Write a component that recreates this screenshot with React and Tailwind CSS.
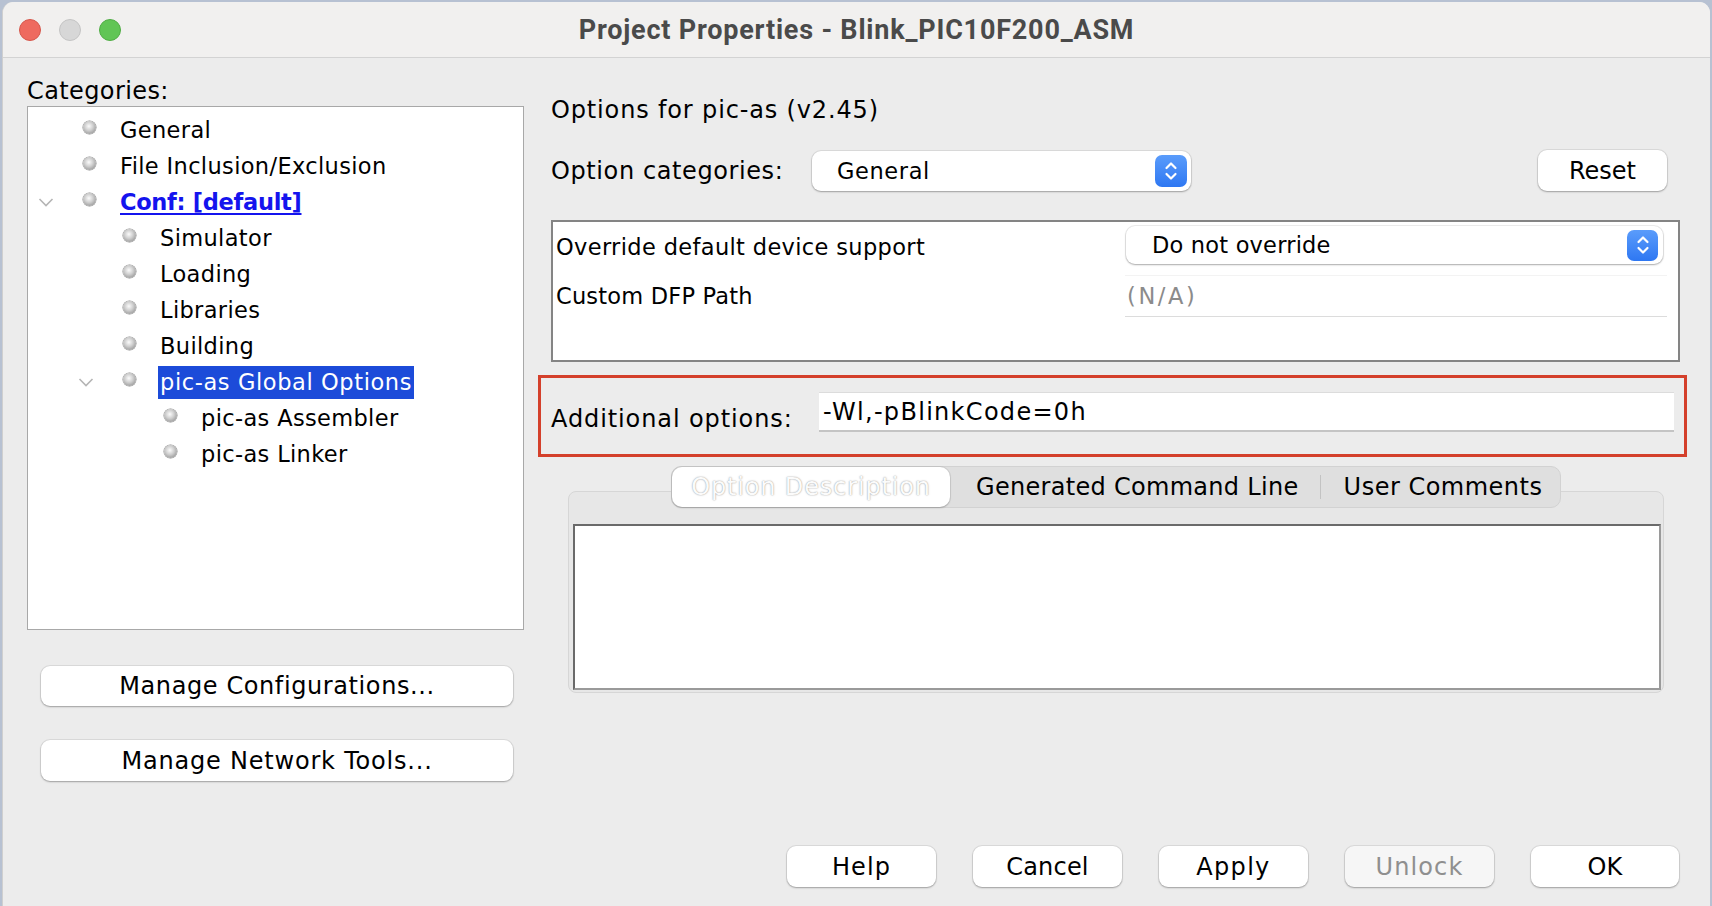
import React from 'react';

const items = [
  { label: 'General', level: 0 },
  { label: 'File Inclusion/Exclusion', level: 0 },
  { label: 'Conf: [default]', level: 0, chevron: true, link: true },
  { label: 'Simulator', level: 1 },
  { label: 'Loading', level: 1 },
  { label: 'Libraries', level: 1 },
  { label: 'Building', level: 1 },
  { label: 'pic-as Global Options', level: 1, chevron: true, selected: true },
  { label: 'pic-as Assembler', level: 2 },
  { label: 'pic-as Linker', level: 2 },
];

const indent = ['pl-0', 'pl-[40px]', 'pl-[81px]'];

function Chevron() {
  return (
    <svg width="18" height="12" viewBox="0 0 18 12">
      <path d="M2.5 3 L9 9.5 L15.5 3" fill="none" stroke="#b5b5b5" strokeWidth="1.6" />
    </svg>
  );
}

function Bullet() {
  return (
    <span className="block w-[13px] h-[13px] mb-[5px] rounded-full bg-[radial-gradient(circle_at_45%_40%,#fbfbfb_0%,#cfcfcf_40%,#7d7d7d_100%)] shadow-[0_0_0_0.5px_#8f8f8f]" />
  );
}

function Stepper({ className }) {
  return (
    <span className={'flex items-center justify-center rounded-[7px] bg-gradient-to-b from-[#5a9cfb] to-[#2e77f2] ' + className}>
      <svg width="16" height="24" viewBox="0 0 16 24">
        <path d="M3.5 9 L8 4.5 L12.5 9" fill="none" stroke="#ffffff" strokeWidth="2.2" strokeLinecap="round" strokeLinejoin="round" />
        <path d="M3.5 15 L8 19.5 L12.5 15" fill="none" stroke="#ffffff" strokeWidth="2.2" strokeLinecap="round" strokeLinejoin="round" />
      </svg>
    </span>
  );
}

function Button({ children, className, disabled }) {
  return (
    <div
      className={
        'flex items-center justify-center rounded-[9px] text-[24px] shadow-[0_0_0_1px_rgba(0,0,0,0.07),0_1px_2px_rgba(0,0,0,0.28)] ' +
        (disabled ? 'bg-[#f6f6f6] text-[#8f8f8f] ' : 'bg-white text-black ') +
        className
      }
    >
      {children}
    </div>
  );
}

export default function App() {
  return (
    <div className="w-[1712px] h-[906px] overflow-hidden bg-[#b7c1d2] pt-[2px] pl-[2px] pr-[2px] [font-family:'DejaVu_Sans',sans-serif] text-[22.5px] leading-[26px] text-black">
      <div className="h-[904px] bg-[#ececec] rounded-t-[11px] flex flex-col border-l border-[#cfcfcf]">
        {/* Title bar */}
        <div className="h-[56px] shrink-0 bg-[#f1f0ef] rounded-t-[11px] border-b border-[#d3d3d3] grid grid-cols-[1fr_auto_1fr] items-center">
          <div className="flex items-center gap-[18px] pl-[16px]">
            <span className="w-[22px] h-[22px] rounded-full bg-[#ee6a5f] border border-[#d6574c]" />
            <span className="w-[22px] h-[22px] rounded-full bg-[#d7d7d7] border border-[#c4c4c4]" />
            <span className="w-[22px] h-[22px] rounded-full bg-[#61c555] border border-[#50ad44]" />
          </div>
          <div className="[font-family:Roboto,sans-serif] font-bold text-[27px] tracking-[0.8px] text-[#4a4a4a]">
            Project Properties - Blink_PIC10F200_ASM
          </div>
          <div />
        </div>

        {/* Body */}
        <div className="flex pl-[24px]">
          {/* Left column */}
          <div className="w-[497px] flex flex-col pt-[20px]">
            <div className="text-[24px] tracking-[0.4px]">Categories:</div>
            <div className="mt-[2px] h-[524px] bg-white border border-[#a8a8a8] pt-[5px] tracking-[0.35px]">
              {items.map((it) => (
                <div key={it.label} className={'flex items-center h-[36px] ' + indent[it.level]}>
                  <span className="w-[36px] flex justify-center">{it.chevron ? <Chevron /> : null}</span>
                  <span className="ml-[19px]">
                    <Bullet />
                  </span>
                  {it.selected ? (
                    <span className="ml-[22px] px-[2px] h-[33px] flex items-center bg-[#1c4bd9] text-white tracking-[0.6px]">
                      {it.label}
                    </span>
                  ) : it.link ? (
                    <span className="ml-[24px] font-bold text-[#1414ee] underline underline-offset-[3px] tracking-[-0.3px]">
                      {it.label}
                    </span>
                  ) : (
                    <span className="ml-[24px]">{it.label}</span>
                  )}
                </div>
              ))}
            </div>
            <Button className="mt-[36px] ml-[14px] w-[472px] h-[40px] tracking-[0.6px]">Manage Configurations...</Button>
            <Button className="mt-[34px] ml-[14px] w-[472px] h-[41px] tracking-[0.8px]">Manage Network Tools...</Button>
          </div>

          {/* Right column */}
          <div className="w-[1149px] ml-[14px] flex flex-col pt-[39px]">
            <div className="pl-[13px] text-[24px] tracking-[0.85px]">Options for pic-as (v2.45)</div>

            <div className="mt-[27px] flex items-center h-[41px]">
              <div className="w-[274px] pl-[13px] text-[24px] tracking-[0.6px]">Option categories:</div>
              <div className="w-[379px] h-[40px] flex items-center bg-white rounded-[9px] shadow-[0_0_0_1px_rgba(0,0,0,0.07),0_1px_2px_rgba(0,0,0,0.28)] pr-[4px]">
                <span className="flex-1 pl-[25px] tracking-[0.6px]">General</span>
                <Stepper className="w-[32px] h-[32px]" />
              </div>
              <div className="flex-1" />
              <Button className="w-[129px] h-[41px] mr-[20px]">Reset</Button>
            </div>

            <div className="mt-[29px] ml-[13px] mr-[7px] h-[142px] bg-white border-2 border-[#848484] pt-[4px] flex flex-col">
              <div className="flex items-center h-[38px]">
                <div className="w-[573px] pl-[3px] pt-[3px] tracking-[0.35px]">Override default device support</div>
                <div className="w-[537px] h-[38px] flex items-center bg-white rounded-[9px] shadow-[0_0_0_1px_rgba(0,0,0,0.07),0_1px_2px_rgba(0,0,0,0.28)] pr-[5px]">
                  <span className="flex-1 pl-[26px] tracking-[0.2px]">Do not override</span>
                  <Stepper className="w-[31px] h-[31px]" />
                </div>
              </div>
              <div className="flex items-center mt-[11px] h-[42px]">
                <div className="w-[572px] pl-[3px] tracking-[0.2px]">Custom DFP Path</div>
                <div className="w-[542px] h-[42px] flex items-center pl-[2px] border-t border-[#f3f3f3] border-b border-b-[#dcdcdc] text-[#8b8b8b] tracking-[2.6px]">
                  (N/A)
                </div>
              </div>
            </div>

            <div className="mt-[13px] h-[82px] border-[3px] border-[#d4402b] flex items-start pt-[14px] pl-[10px] pr-[10px]">
              <div className="w-[268px] mt-[14px] text-[24px] tracking-[0.9px]">Additional options:</div>
              <div className="flex-1 h-[40px] bg-white border-t border-[#dcdcdc] border-b-2 border-b-[#c4c4c4] flex items-center pl-[4px] text-[24px] tracking-[1.3px]">
                -Wl,-pBlinkCode=0h
              </div>
            </div>

            <div className="mt-[9px] ml-[30px] mr-[23px] flex flex-col">
              <div className="relative z-10 -mb-[17px] mx-auto w-[890px] h-[42px] flex items-center rounded-[10px] bg-[#dfdfdf] border border-[#d2d2d2] text-[24px]">
                <div className="w-[278px] h-[40px] flex items-center justify-center rounded-[10px] bg-white shadow-[0_0_0_1px_rgba(0,0,0,0.06),0_1px_2px_rgba(0,0,0,0.2)] text-[#fbfbfb] [text-shadow:0_0_1.5px_#7f7f7f] tracking-[0.85px]">
                  Option Description
                </div>
                <div className="ml-[26px] tracking-[0.3px]">Generated Command Line</div>
                <div className="ml-[21px] w-[1px] h-[24px] bg-[#c3c3c3]" />
                <div className="ml-[23px] tracking-[0.5px]">User Comments</div>
              </div>
              <div className="h-[202px] rounded-[8px] bg-[#e7e7e7] border border-[#d6d6d6] pt-[32px] pl-[4px] pr-[2px] pb-[2px] flex">
                <div className="flex-1 bg-white border-2 border-t-[#6a6a6a] border-l-[#6a6a6a] border-r-[#9a9a9a] border-b-[#9a9a9a]" />
              </div>
            </div>
          </div>
        </div>

        {/* Bottom buttons */}
        <div className="mt-auto flex justify-end gap-[37px] pr-[31px] pb-[19px]">
          <Button className="w-[149px] h-[41px] tracking-[1.1px]">Help</Button>
          <Button className="w-[149px] h-[41px] tracking-[0.2px]">Cancel</Button>
          <Button className="w-[149px] h-[41px] tracking-[1.3px]">Apply</Button>
          <Button className="w-[149px] h-[41px] tracking-[1.1px]" disabled>Unlock</Button>
          <Button className="w-[148px] h-[41px] tracking-[0.3px]">OK</Button>
        </div>
      </div>
    </div>
  );
}
